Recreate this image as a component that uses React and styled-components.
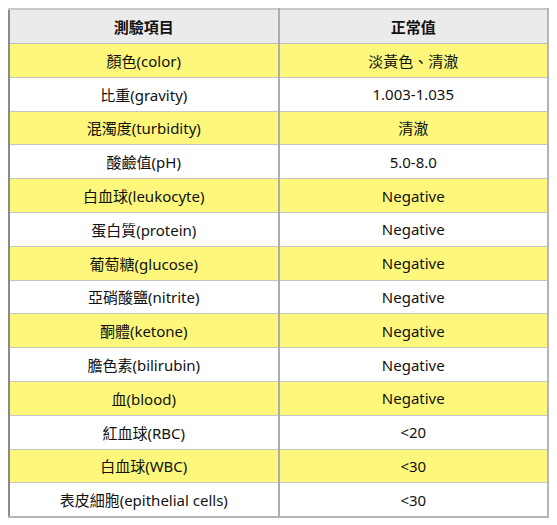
import styled, { createGlobalStyle } from 'styled-components';

const GlobalStyle = createGlobalStyle`
  body {
    margin: 0;
    background: #ffffff;
    font-family: "Noto Sans", "Noto Sans CJK TC", sans-serif;
  }
`;

const rows = [
  ['顏色(color)', '淡黃色、清澈'],
  ['比重(gravity)', '1.003-1.035'],
  ['混濁度(turbidity)', '清澈'],
  ['酸鹼值(pH)', '5.0-8.0'],
  ['白血球(leukocyte)', 'Negative'],
  ['蛋白質(protein)', 'Negative'],
  ['葡萄糖(glucose)', 'Negative'],
  ['亞硝酸鹽(nitrite)', 'Negative'],
  ['酮體(ketone)', 'Negative'],
  ['膽色素(bilirubin)', 'Negative'],
  ['血(blood)', 'Negative'],
  ['紅血球(RBC)', '<20'],
  ['白血球(WBC)', '<30'],
  ['表皮細胞(epithelial cells)', '<30'],
];

const App = () => {
  return (
    <>
      <GlobalStyle />
      <Page>
        <Table>
          <thead>
            <tr>
              <HeadCell>測驗項目</HeadCell>
              <HeadCell>正常值</HeadCell>
            </tr>
          </thead>
          <tbody>
            {rows.map(([item, value], i) => (
              <Row key={item} $highlight={i % 2 === 0}>
                <Cell>{item}</Cell>
                <Cell>{value}</Cell>
              </Row>
            ))}
          </tbody>
        </Table>
      </Page>
    </>
  );
};

export default App;

const Page = styled.div`
  padding: 8px 8px 0 8px;
  width: 557px;
  box-sizing: border-box;
`;

const Table = styled.table`
  width: 541px;
  border-collapse: collapse;
  table-layout: fixed;
  border-left: 2px solid #8a8a8a;
  border-right: 2px solid #b5b5b5;
  border-top: 2px solid #c8c8c8;
  border-bottom: 2px solid #b5b5b5;
  color: #111111;
  font-size: 15px;
`;

const HeadCell = styled.th`
  height: 33px;
  padding: 0;
  background: #ebebeb;
  font-weight: 700;
  text-align: center;
  border-bottom: 1px solid #bdbdbd;
  border-right: 2px solid #adadad;

  &:last-child {
    border-right: none;
  }
`;

const Row = styled.tr`
  background: ${({ $highlight }) => ($highlight ? '#fdf87c' : '#ffffff')};
`;

const Cell = styled.td`
  height: 32.8px;
  padding: 0;
  text-align: center;
  border-bottom: 1px solid #c6c6c6;
  border-right: 2px solid #adadad;

  &:last-child {
    border-right: none;
  }
`;
